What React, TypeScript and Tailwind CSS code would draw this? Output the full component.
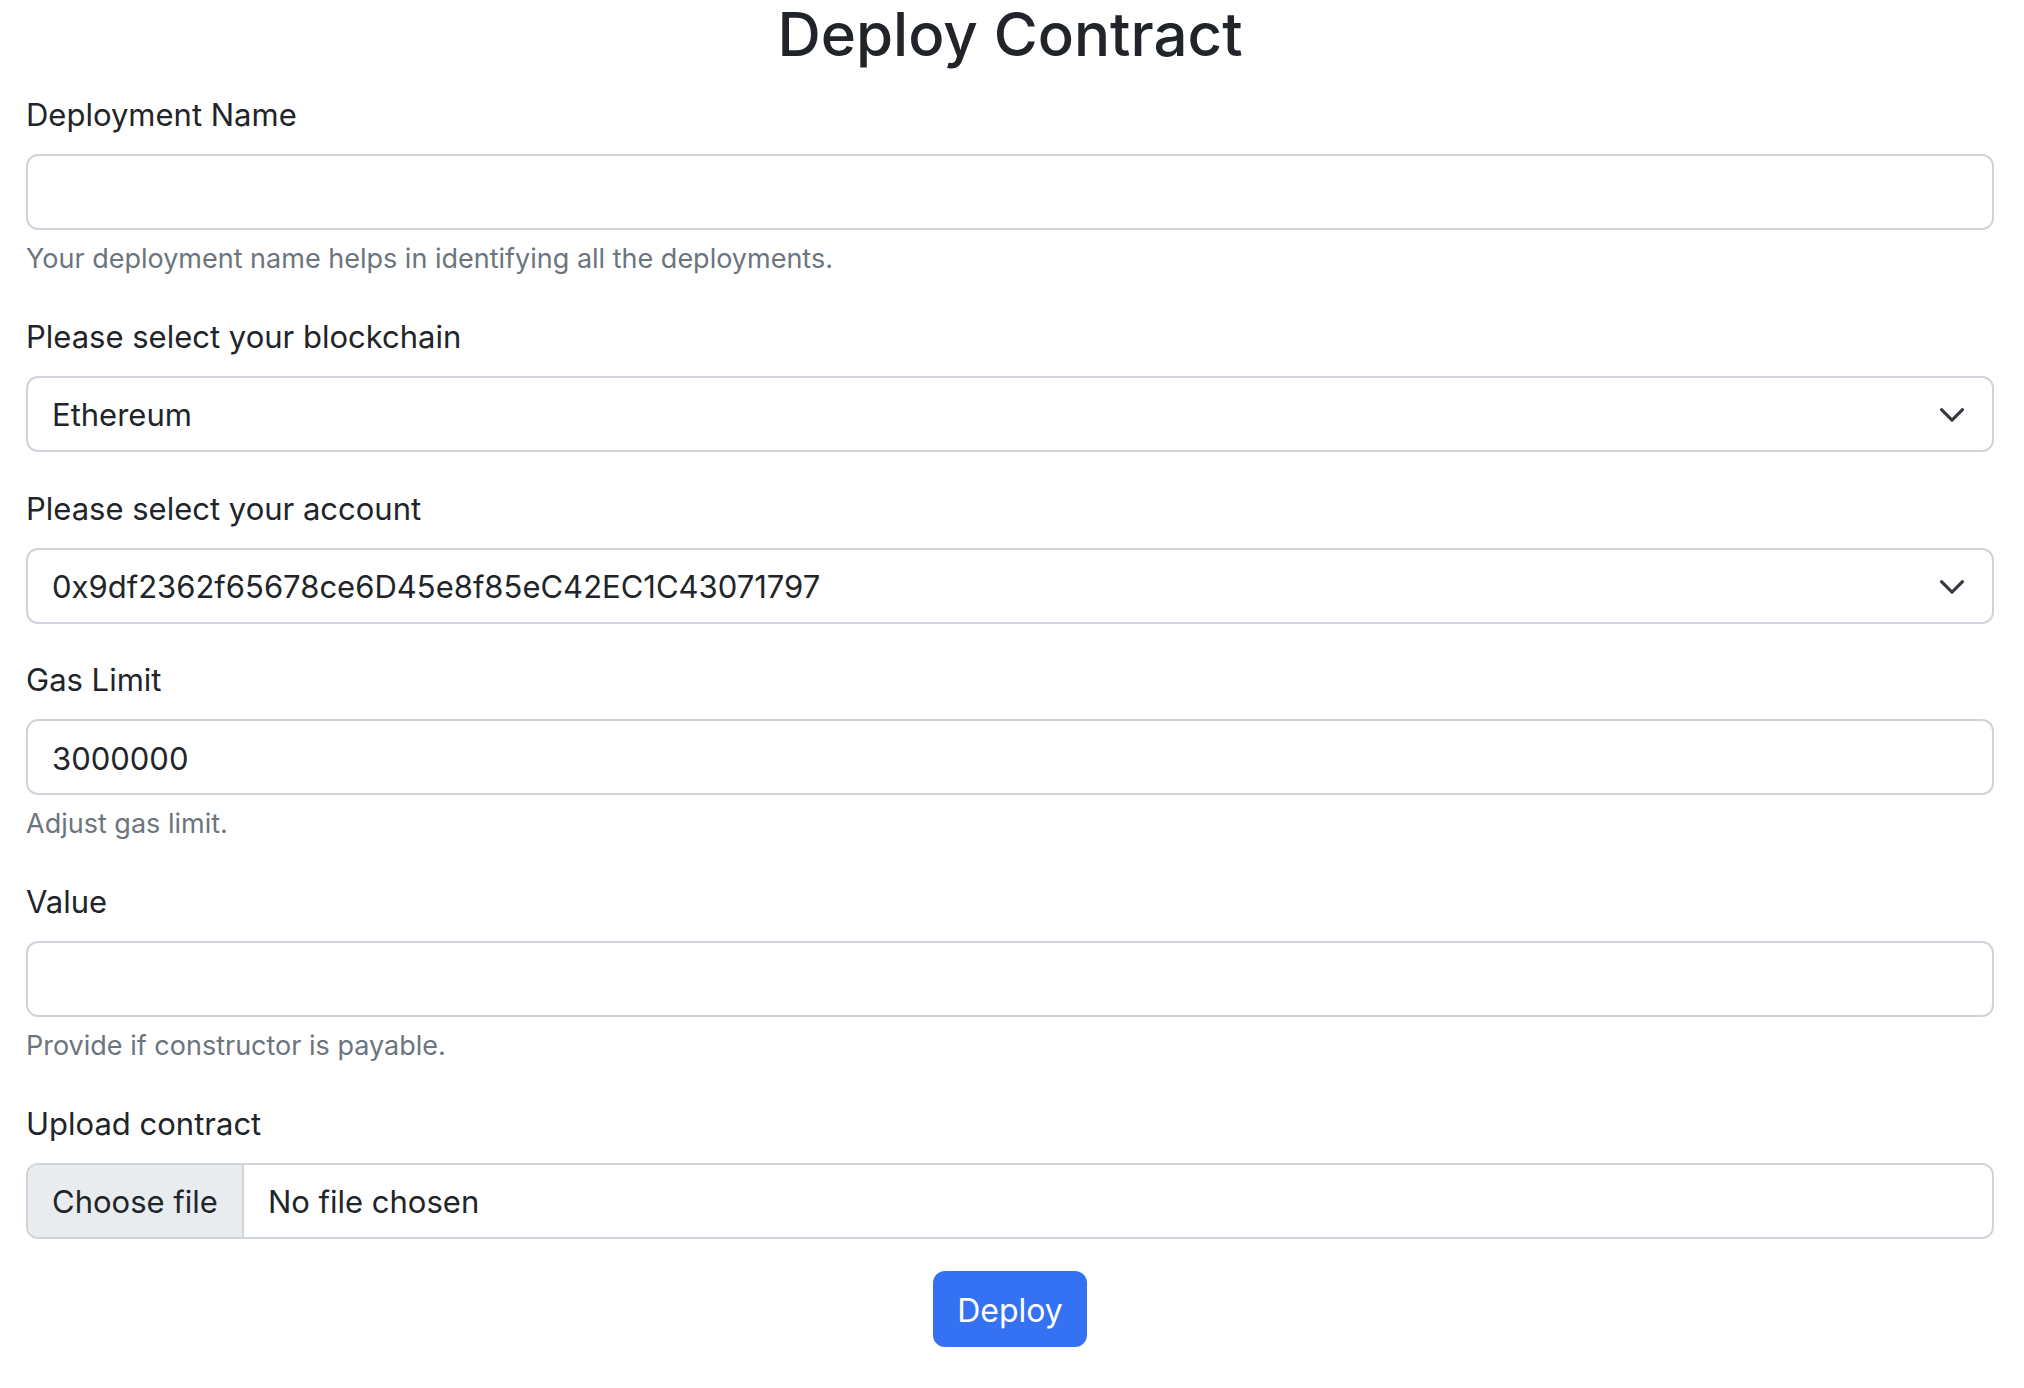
import React from 'react'

function Chevron() {
  return (
    <svg
      className="pointer-events-none absolute right-[28px] top-1/2 -translate-y-1/2 w-[28px] h-[21px]"
      viewBox="0 0 16 12"
      fill="none"
    >
      <path d="m2 3.5 6 6 6-6" stroke="#343a40" strokeWidth="1.8" strokeLinecap="round" strokeLinejoin="round" />
    </svg>
  )
}

const inputCls =
  'block w-full h-[76px] px-[24px] pt-[3px] text-[31px] text-[#212529] bg-white border-2 border-[#ced4da] rounded-[12px] outline-none'

function Label({ children }: { children: React.ReactNode }) {
  return <label className="block text-[31px] leading-[48px] text-[#212529] mb-[15px]">{children}</label>
}

function Help({ children }: { children: React.ReactNode }) {
  return <p className="mt-[8px] text-[27px] leading-[42px] text-[#6c757d]">{children}</p>
}

export default function App() {
  return (
    <div className="min-h-screen bg-white font-['Inter','Noto_Sans',sans-serif] pl-[26px] pr-[30px]">
      {/* Title */}
      <h1 className="pt-[2px] text-center text-[60px] leading-[64px] font-medium text-[#212529] mb-[25px]">
        Deploy Contract
      </h1>

      <form className="flex flex-col" onSubmit={(e) => e.preventDefault()}>
        <div className="mb-[33px]">
          <Label>Deployment Name</Label>
          <input type="text" className={inputCls} />
          <Help>Your deployment name helps in identifying all the deployments.</Help>
        </div>

        <div className="mb-[33px]">
          <Label>Please select your blockchain</Label>
          <div className="relative">
            <select className={inputCls + ' appearance-none'} defaultValue="eth">
              <option value="eth">Ethereum</option>
            </select>
            <Chevron />
          </div>
        </div>

        <div className="mb-[32px]">
          <Label>Please select your account</Label>
          <div className="relative">
            <select className={inputCls + ' appearance-none'} defaultValue="a">
              <option value="a">0x9df2362f65678ce6D45e8f85eC42EC1C43071797</option>
            </select>
            <Chevron />
          </div>
        </div>

        <div className="mb-[33px]">
          <Label>Gas Limit</Label>
          <input type="text" className={inputCls} defaultValue="3000000" />
          <Help>Adjust gas limit.</Help>
        </div>

        <div className="mb-[33px]">
          <Label>Value</Label>
          <input type="text" className={inputCls} />
          <Help>Provide if constructor is payable.</Help>
        </div>

        <div>
          <Label>Upload contract</Label>
          <div className="flex h-[76px] items-stretch border-2 border-[#ced4da] rounded-[12px] overflow-hidden bg-white text-[31px] text-[#212529]">
            <span className="flex items-center pt-[3px] px-[24px] bg-[#e9ecef] border-r-2 border-[#ced4da]">Choose file</span>
            <span className="flex items-center pt-[3px] pl-[24px]">No file chosen</span>
          </div>
        </div>

        <div className="flex justify-center mt-[32px]">
          <button
            type="submit"
            className="h-[76px] px-[24px] pt-[3px] rounded-[12px] bg-[#3571f3] text-white text-[32px]"
          >
            Deploy
          </button>
        </div>
      </form>
    </div>
  )
}
